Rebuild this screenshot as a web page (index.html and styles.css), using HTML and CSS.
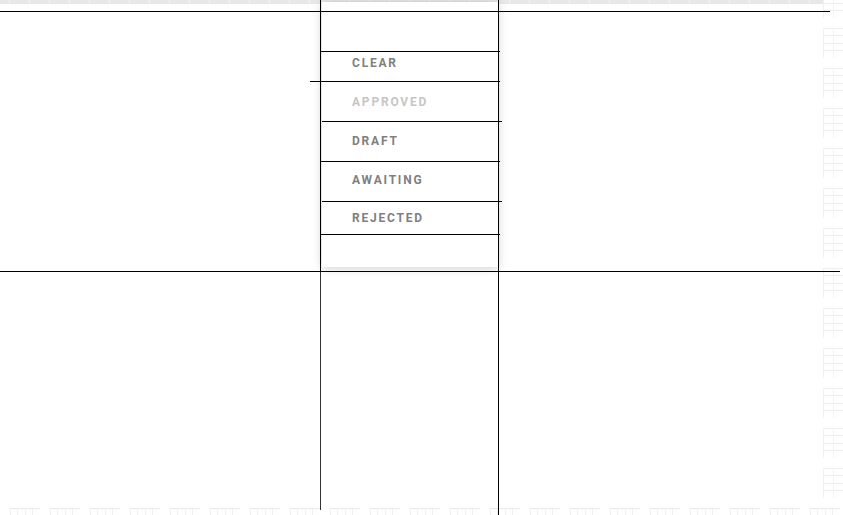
FILE: index.html
```html
<!DOCTYPE html>
<html lang="en">
<head>
<meta charset="utf-8">
<title>Status menu</title>
<link rel="stylesheet" href="styles.css">
</head>
<body>
<div class="page">
  <div class="strip"></div>
  <div class="rail"></div>
  <div class="foot"></div>

  <div class="menu">
    <ul class="menu-list">
      <li class="menu-item">CLEAR</li>
      <li class="menu-item is-disabled">APPROVED</li>
      <li class="menu-item">DRAFT</li>
      <li class="menu-item">AWAITING</li>
      <li class="menu-item">REJECTED</li>
    </ul>
  </div>

  <div class="table">
    <div class="cell c-r c-b"></div>
    <div class="cell c-r c-b"></div>
    <div class="cell c-b short"></div>
    <div class="cell c-r c-b"></div>
    <div class="cell c-r c-b"></div>
    <div class="cell c-b"></div>
    <div class="cell c-r left-end"></div>
    <div class="cell c-r"></div>
    <div class="cell"></div>
  </div>

  <div class="rules">
    <div class="rule"></div>
    <div class="rule wide gap-30"></div>
    <div class="rule shift gap-40"></div>
    <div class="rule gap-40"></div>
    <div class="rule shift gap-40"></div>
    <div class="rule gap-33"></div>
  </div>
</div>
</body>
</html>
```

FILE: styles.css
```css
* { box-sizing: border-box; }

html, body {
  margin: 0;
  padding: 0;
  background: #fff;
}

.page {
  position: relative;
  width: 843px;
  height: 515px;
  overflow: hidden;
  display: grid;
  grid-template-columns: 823px 20px;
  grid-template-rows: 4px 504px 7px;
  font-family: Roboto, "Liberation Sans", Arial, sans-serif;
}

/* faint top strip */
.strip {
  grid-column: 1;
  grid-row: 1;
  background:
    repeating-linear-gradient(to right, transparent 0 9px, #f4f4f4 9px 10px, transparent 10px 20px),
    #e8e8e8;
}

/* right rail of faint grid blocks */
.rail {
  grid-column: 2;
  grid-row: 1 / 3;
  background:
    linear-gradient(to bottom, transparent 0 30px, #fff 30px 40px) 0 28px / 100% 40px repeat-y,
    linear-gradient(to right, #f0f0f0 0 1px, transparent 1px 10px, #f3f3f3 10px 11px, transparent 11px) 0 0 / 100% 100% no-repeat,
    repeating-linear-gradient(to bottom, #eeeeee 0 1px, transparent 1px 7.5px) 0 28px / 100% 40px repeat-y;
}

/* bottom row of faint grid blocks */
.foot {
  grid-column: 1 / 3;
  grid-row: 3;
  background:
    linear-gradient(to right, transparent 0 30px, #fff 30px 40px) 10px 0 / 40px 100% repeat-x,
    linear-gradient(#eaeaea, #eaeaea) 0 0 / 100% 1px no-repeat,
    repeating-linear-gradient(to right, #f0f0f0 0 1px, transparent 1px 7.5px) 10px 0 / 40px 100% repeat-x;
}

/* table lines */
.table {
  grid-column: 1 / 3;
  grid-row: 1 / 4;
  position: relative;
  z-index: 2;
  width: 840px;
  display: grid;
  grid-template-columns: 321px 178px 341px;
  grid-template-rows: 12px 260px 243px;
}

.cell { background: transparent; }
.c-r { border-right: 1px solid #000; }
.c-b { border-bottom: 1px solid #000; }
.short { margin-right: 10px; }
.left-end { margin-bottom: 5px; border-right-color: #333; }

/* popover menu */
.menu {
  position: absolute;
  left: 322px;
  top: 2px;
  width: 176px;
  height: 265px;
  z-index: 1;
  background: #fff;
  box-shadow: 0 1px 9px rgba(0, 0, 0, 0.2);
  padding-top: 42px;
}

.menu-list {
  list-style: none;
  margin: 0;
  padding: 0;
  display: flex;
  flex-direction: column;
}

.menu-item {
  height: 38.75px;
  display: flex;
  align-items: center;
  padding-left: 30px;
  font-size: 12px;
  font-weight: 700;
  letter-spacing: 1.8px;
  color: #808080;
}

.menu-item.is-disabled { color: #c6c6c6; }

/* separator rules drawn over the menu */
.rules {
  position: absolute;
  left: 310px;
  top: 51px;
  width: 192px;
  z-index: 3;
  display: flex;
  flex-direction: column;
}

.rule {
  height: 1px;
  width: 180px;
  margin-left: 10px;
  background: #000;
}

.rule.wide { margin-left: 0; width: 190px; }
.rule.shift { margin-left: 12px; }
.gap-30 { margin-top: 29px; }
.gap-40 { margin-top: 39px; }
.gap-33 { margin-top: 32px; }
```
